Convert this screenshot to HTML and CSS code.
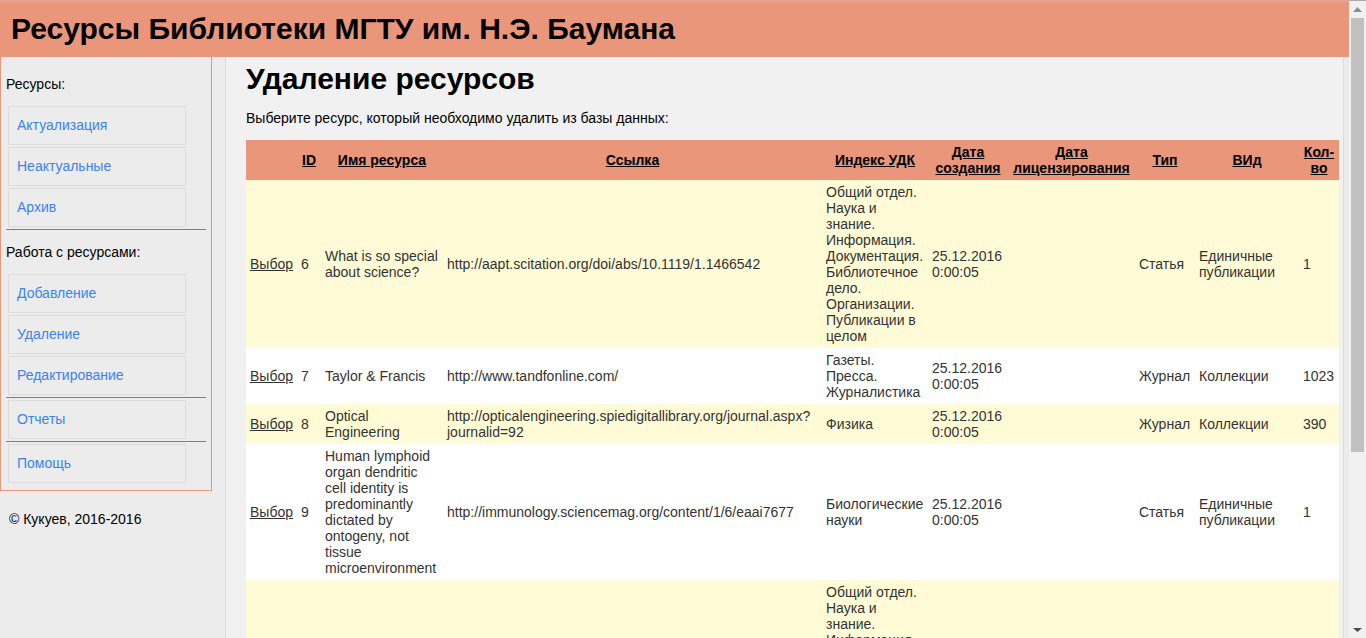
FILE: index.html
```html
<!DOCTYPE html>
<html lang="ru">
<head>
<meta charset="utf-8">
<title>Удаление ресурсов</title>
<link rel="stylesheet" href="styles.css">
</head>
<body>
<div class="page">
  <header class="site-header"><h1>Ресурсы Библиотеки МГТУ им. Н.Э. Баумана</h1></header>
  <div class="columns">
    <aside class="sidebar">
      <nav class="menu">
        <p class="menu-title">Ресурсы:</p>
        <ul class="menu-list">
          <li><a href="#">Актуализация</a></li>
          <li><a href="#">Неактуальные</a></li>
          <li><a href="#">Архив</a></li>
        </ul>
        <hr>
        <p class="menu-title">Работа с ресурсами:</p>
        <ul class="menu-list">
          <li><a href="#">Добавление</a></li>
          <li><a href="#">Удаление</a></li>
          <li><a href="#">Редактирование</a></li>
        </ul>
        <hr>
        <ul class="menu-list">
          <li><a href="#">Отчеты</a></li>
        </ul>
        <hr>
        <ul class="menu-list">
          <li><a href="#">Помощь</a></li>
        </ul>
      </nav>
      <p class="copyright">© Кукуев, 2016-2016</p>
    </aside>
    <main class="content">
      <h2>Удаление ресурсов</h2>
      <p class="lead">Выберите ресурс, который необходимо удалить из базы данных:</p>
      <table class="grid">
        <colgroup>
          <col class="c-select"><col class="c-id"><col class="c-name"><col class="c-link"><col class="c-udk">
          <col class="c-created"><col class="c-licensed"><col class="c-type"><col class="c-kind"><col class="c-count">
        </colgroup>
        <thead>
          <tr>
            <td></td>
            <th><a href="#">ID</a></th>
            <th><a href="#">Имя ресурса</a></th>
            <th><a href="#">Ссылка</a></th>
            <th><a href="#">Индекс УДК</a></th>
            <th><a href="#">Дата создания</a></th>
            <th><a href="#">Дата лицензирования</a></th>
            <th><a href="#">Тип</a></th>
            <th><a href="#">ВИд</a></th>
            <th><a href="#">Кол-во</a></th>
          </tr>
        </thead>
        <tbody>
          <tr>
            <td><a href="#">Выбор</a></td><td>6</td><td>What is so special about science?</td>
            <td>http://aapt.scitation.org/doi/abs/10.1119/1.1466542</td>
            <td>Общий отдел. Наука и знание. Информация. Документация. Библиотечное дело. Организации. Публикации в целом</td>
            <td>25.12.2016 0:00:05</td><td></td><td>Статья</td><td>Единичные публикации</td><td>1</td>
          </tr>
          <tr>
            <td><a href="#">Выбор</a></td><td>7</td><td>Taylor &amp; Francis</td>
            <td>http://www.tandfonline.com/</td>
            <td>Газеты. Пресса. Журналистика</td>
            <td>25.12.2016 0:00:05</td><td></td><td>Журнал</td><td>Коллекции</td><td>1023</td>
          </tr>
          <tr>
            <td><a href="#">Выбор</a></td><td>8</td><td>Optical Engineering</td>
            <td>http://opticalengineering.spiedigitallibrary.org/journal.aspx?<wbr>journalid=92</td>
            <td>Физика</td>
            <td>25.12.2016 0:00:05</td><td></td><td>Журнал</td><td>Коллекции</td><td>390</td>
          </tr>
          <tr>
            <td><a href="#">Выбор</a></td><td>9</td><td>Human lymphoid organ dendritic cell identity is predominantly dictated by ontogeny, not tissue microenvironment</td>
            <td>http://immunology.sciencemag.org/content/1/6/eaai7677</td>
            <td>Биологические науки</td>
            <td>25.12.2016 0:00:05</td><td></td><td>Статья</td><td>Единичные публикации</td><td>1</td>
          </tr>
          <tr>
            <td></td><td></td><td></td><td></td>
            <td>Общий отдел. Наука и знание. Информация. Документация. Библиотечное дело. Организации. Публикации в целом</td>
            <td></td><td></td><td></td><td></td><td></td>
          </tr>
        </tbody>
      </table>
    </main>
  </div>
</div>
<div class="scrollbar" aria-hidden="true">
  <svg class="arrow" viewBox="0 0 17 17"><path d="M4 11h9L8.500 6z" fill="#8c8c8c"/></svg>
  <div class="track"><div class="thumb"></div></div>
  <svg class="arrow" viewBox="0 0 17 17"><path d="M4 7h9l-4.500 4z" fill="#4d4d4d"/></svg>
</div>
</body>
</html>
```
FILE: styles.css
```css
* { box-sizing: border-box; }

body {
  margin: 0;
  height: 100vh;
  overflow: hidden;
  display: flex;
  background: #ececec;
  color: #000;
  font: 14px/16px "Liberation Sans", Arial, sans-serif;
}

h1, h2, p, ul { margin: 0; padding: 0; }
ul { list-style: none; }

.page {
  flex: 1;
  min-width: 0;
  display: flex;
  flex-direction: column;
  overflow: hidden;
}

.site-header {
  flex: none;
  background: #e9967a;
  border-top: 2px solid #dfa597;
  padding: 9px 11px 10px;
}

h1, h2 { font-size: 30px; line-height: 36px; font-weight: bold; }

.columns { flex: 1; min-height: 0; display: flex; }

.sidebar { flex: none; width: 226px; border-right: 1px solid #dcdcdc; }

.menu {
  width: 212px;
  padding: 0 5px 7px;
  border: 1px solid #e9967a;
  border-top: 0;
}

.menu-title { padding: 19px 0 14px; }
.menu hr + .menu-title { padding-top: 12px; }

.menu-list {
  width: 182px;
  padding: 0 2px;
  display: flex;
  flex-direction: column;
  gap: 2px;
}

.menu-list a {
  display: block;
  padding: 10px 8px 11px;
  border: 1px solid #dcdcdc;
  color: #3b83f0;
  text-decoration: none;
}

.menu hr {
  margin: 2px 0;
  border: 0;
  border-top: 1px solid #808080;
}

.copyright { padding: 20px 9px; }

.content {
  flex: 1;
  min-width: 0;
  margin-right: 5px;
  padding: 4px 4px 0 20px;
  background: #f1f1f1;
  border-right: 1px solid #dcdcdc;
}

.lead { padding: 13px 0 14px; }

.grid {
  width: 100%;
  table-layout: fixed;
  border-collapse: collapse;
  color: #333;
}

.grid td, .grid th { padding: 4px; text-align: left; }
.grid thead th { text-align: center; }
.grid a { color: inherit; }
.grid thead { background: #e9967a; color: #000; }
.grid tbody tr { background: #fff; }
.grid tbody tr:nth-child(odd) { background: #fffbd6; }

.c-select { width: 51px; }
.c-id { width: 24px; }
.c-name { width: 122px; }
.c-udk { width: 106px; }
.c-created { width: 80px; }
.c-licensed { width: 127px; }
.c-type { width: 60px; }
.c-kind { width: 104px; }
.c-count { width: 40px; }

.scrollbar {
  flex: none;
  width: 17px;
  display: flex;
  flex-direction: column;
  background: #f1f1f1;
  border-top: 1px solid #aaa;
}

.arrow { flex: none; width: 17px; height: 17px; }
.track { flex: 1; padding: 0 2px; }
.thumb { height: 72%; background: #c1c1c1; }
```
